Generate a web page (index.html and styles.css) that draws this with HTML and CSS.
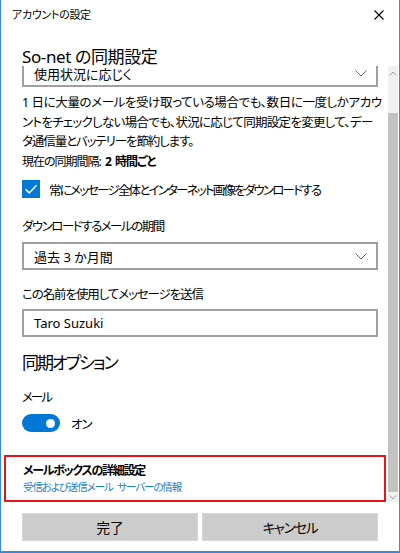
FILE: index.html
```html
<!DOCTYPE html>
<html lang="ja">
<head>
<meta charset="utf-8">
<link rel="stylesheet" href="styles.css">
</head>
<body>
<div class="window">
  <div class="titlebar">
    <span class="title">アカウントの設定</span>
    <svg class="close" width="10" height="10" viewBox="0 0 10 10"><path d="M0.5 0.5 L9.5 9.5 M9.5 0.5 L0.5 9.5" stroke="#000" stroke-width="1.1" fill="none"/></svg>
  </div>
  <div class="heading">So-net の同期設定</div>
  <div class="scroll">
    <div class="content">
      <div class="inner">
        <div class="select">
          <span>使用状況に応じく</span>
          <svg class="chev" width="12" height="7" viewBox="0 0 12 7"><path d="M0.5 0.5 L6 6 L11.5 0.5" stroke="#666" stroke-width="1" fill="none"/></svg>
        </div>
        <p class="desc"><span class="ln1">1 日に大量のメールを受け取っている場合でも、数日に一度しかアカウ</span><br><span class="ln2">ントをチェックしない場合でも、状況に応じて同期設定を変更して、デー</span><br><span class="ln3">タ通信量とバッテリーを節約します。</span></p>
        <p class="current">現在の同期間隔: <b>2 時間ごと</b></p>
        <div class="check">
          <span class="box"><svg width="18" height="18" viewBox="0 0 18 18"><path d="M3.5 9.2 L7.2 12.9 L14.6 5.2" stroke="#fff" stroke-width="1.5" fill="none"/></svg></span>
          <span class="check-text">常にメッセージ全体とインターネット画像をダウンロードする</span>
        </div>
        <p class="label l1">ダウンロードするメールの期間</p>
        <div class="select s2">
          <span>過去 3 か月間</span>
          <svg class="chev" width="12" height="7" viewBox="0 0 12 7"><path d="M0.5 0.5 L6 6 L11.5 0.5" stroke="#666" stroke-width="1" fill="none"/></svg>
        </div>
        <p class="label l2">この名前を使用してメッセージを送信</p>
        <div class="textbox">Taro Suzuki</div>
        <div class="subhead">同期オプション</div>
        <p class="label l3">メール</p>
        <div class="toggle-row">
          <span class="toggle"><span class="knob"></span></span>
          <span class="on">オン</span>
        </div>
      </div>
      <div class="advanced">
        <div class="adv-title">メールボックスの詳細設定</div>
        <div class="adv-link">受信および送信メール サーバーの情報</div>
      </div>
    </div>
    <div class="scrollbar">
      <div class="arrow up"><svg width="8" height="5" viewBox="0 0 8 5"><path d="M0.5 4.5 L4 1 L7.5 4.5" stroke="#a0a0a0" stroke-width="1" fill="none"/></svg></div>
      <div class="track-gap"></div>
      <div class="thumb"></div>
      <div class="arrow down"><svg width="8" height="5" viewBox="0 0 8 5"><path d="M0.5 0.5 L4 4 L7.5 0.5" stroke="#a0a0a0" stroke-width="1" fill="none"/></svg></div>
    </div>
  </div>
  <div class="buttons">
    <div class="btn">完了</div>
    <div class="btn cancel">キャンセル</div>
  </div>
</div>
</body>
</html>
```
FILE: styles.css
```css
* { box-sizing: border-box; }
html, body { margin: 0; padding: 0; background: #fff; }
body {
  font-family: "Noto Sans", "Noto Sans CJK JP", sans-serif;
  font-feature-settings: "palt";
  color: #000;
}
.window {
  width: 400px;
  height: 553px;
  border-left: 1px solid #3a8ad8;
  border-right: 1px solid #3a8ad8;
  border-bottom: 2px solid #3a8ad8;
  display: flex;
  flex-direction: column;
  overflow: hidden;
}
.titlebar {
  height: 30px;
  display: flex;
  align-items: center;
  justify-content: space-between;
  padding: 0 15px 0 11px;
  flex: none;
}
.title { font-size: 11px; line-height: 16px; letter-spacing: -0.3px; }
.close { display: block; }
.heading {
  flex: none;
  padding: 17px 0 0 21px;
  height: 36px;
  font-size: 17px;
  line-height: 19px;
  letter-spacing: -0.4px;
}
.scroll {
  flex: none;
  height: 436px;
  display: flex;
}
.content {
  flex: 1;
  overflow: hidden;
  display: flex;
  flex-direction: column;
}
.inner {
  padding: 0 10px 0 21px;
  margin-top: -7px;
  font-size: 12.5px;
  white-space: nowrap;
}
p { margin: 0; }
.select, .textbox {
  height: 28px;
  border: 2px solid #a0a0a0;
  display: flex;
  align-items: center;
  justify-content: space-between;
  padding: 0 9px 0 10px;
  font-size: 13px;
}
.chev { display: block; }
.desc { margin-top: 6px; line-height: 19.5px; }
.ln1 { letter-spacing: -0.4px; }
.ln2 { letter-spacing: -0.7px; }
.ln3 { letter-spacing: -1.1px; }
.current { line-height: 20px; font-size: 12px; letter-spacing: -1px; word-spacing: 2px; }
.current b { font-weight: 700; }
.check {
  margin-top: 8.5px;
  height: 18px;
  display: flex;
  align-items: center;
  gap: 9px;
}
.check-text { letter-spacing: -1.8px; }
.box {
  width: 18px;
  height: 18px;
  background: #0078d7;
  display: block;
  flex: none;
}
.box svg { display: block; }
.label { line-height: 20px; }
.l1 { margin-top: 19px; letter-spacing: -1.5px; }
.s2 { margin-top: 5px; }
.l2 { margin-top: 15px; letter-spacing: -1.1px; }
.textbox { margin-top: 4px; }
.subhead {
  margin-top: 13px;
  font-size: 17px;
  line-height: 26px;
  letter-spacing: -2px;
}
.l3 { margin-top: 12px; letter-spacing: -2px; }
.toggle-row {
  margin-top: 6px;
  height: 18px;
  display: flex;
  align-items: center;
  gap: 11px;
}
.on { letter-spacing: -1px; }
.toggle {
  width: 38px;
  height: 18px;
  border-radius: 9px;
  background: #0078d7;
  display: flex;
  align-items: center;
  justify-content: flex-end;
  padding-right: 5px;
  flex: none;
}
.knob {
  width: 9px;
  height: 9px;
  border-radius: 50%;
  background: #fff;
}
.advanced {
  margin: 23px 2px 0 3px;
  height: 47px;
  border: 2px solid #e8141b;
  padding: 5px 0 6px 17px;
  white-space: nowrap;
}
.adv-title {
  font-size: 12px;
  font-weight: 700;
  line-height: 18px;
  letter-spacing: -1.3px;
}
.adv-link {
  font-size: 10.5px;
  line-height: 14px;
  color: #1a7fd6;
  letter-spacing: -1.1px;
  word-spacing: 3px;
}
.scrollbar {
  flex: none;
  width: 10px;
  margin-right: 1px;
  background: #f0f0f0;
  display: flex;
  flex-direction: column;
}
.arrow {
  display: flex;
  align-items: center;
  justify-content: center;
}
.arrow svg { display: block; }
.up { height: 14px; }
.track-gap { height: 33px; }
.thumb { height: 379px; background: #c2c2c2; }
.down { height: 10px; }
.buttons {
  flex: none;
  display: flex;
  gap: 4px;
  padding: 11px 21px 0 21px;
}
.btn {
  flex: 1;
  height: 28px;
  background: #cccccc;
  border: 1px solid #d6d6d6;
  display: flex;
  align-items: center;
  justify-content: center;
  font-size: 13.5px;
}
.cancel { letter-spacing: -1.3px; }
```
